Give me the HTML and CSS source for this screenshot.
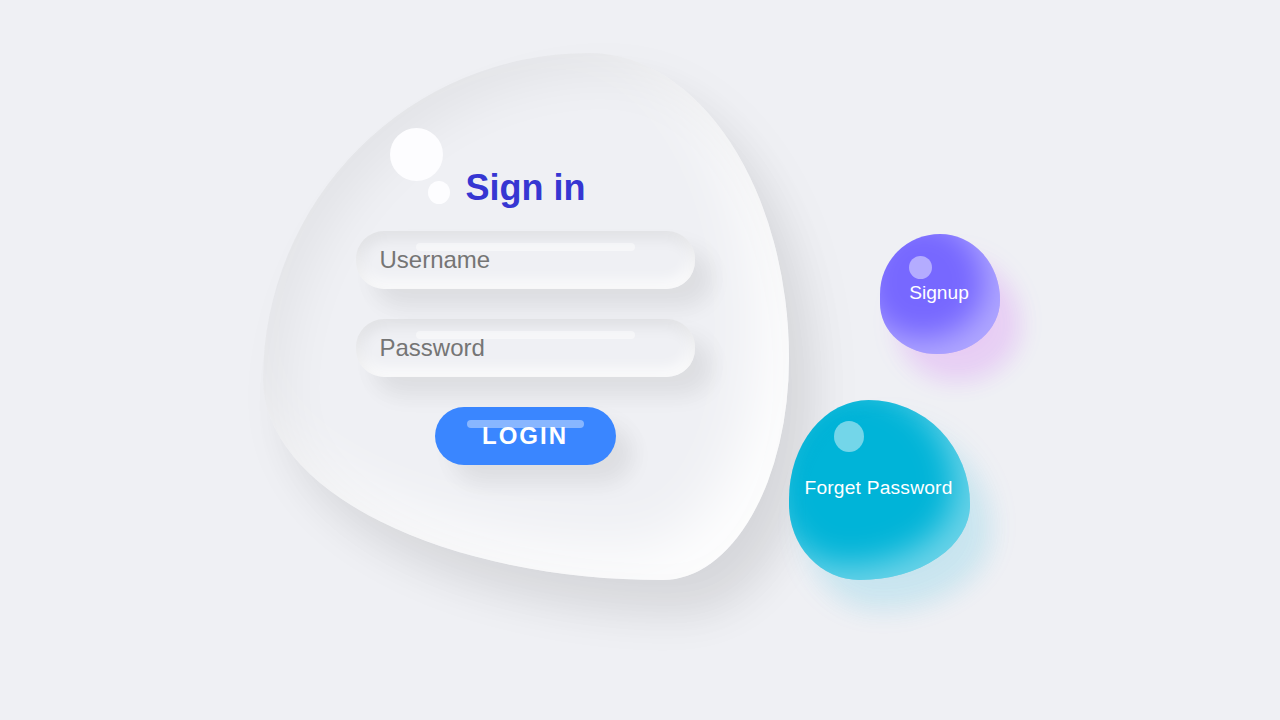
FILE: index.html
```html
<!DOCTYPE html>
<html lang="en">
<head>
    <meta charset="UTF-8">
    <meta name="viewport" content="width=device-width, initial-scale=1.0">
    <title>Sign in</title>
    <link rel="stylesheet" href="styles.css">
</head>
<body>

    <div class="container">
        <!-- Main form blob -->
        <div class="login-blob">
            <h2>Sign in</h2>
            <form class="login-form">
                <div class="field">
                    <input type="text" placeholder="Username">
                </div>
                <div class="field">
                    <input type="password" placeholder="Password">
                </div>
                <div class="field field-btn">
                    <button type="button">LOGIN</button>
                </div>
            </form>
        </div>

        <!-- Side links -->
        <div class="side-links">
            <a href="#" class="side-link signup">Signup</a>
            <a href="#" class="side-link forget">Forget Password</a>
        </div>
    </div>

</body>
</html>
```

FILE: styles.css
```css
/* General Styles */
* {
    box-sizing: border-box;
}

body {
    margin: 0;
    width: 1280px;
    height: 720px;
    overflow: hidden;
    background-color: #eff0f4;
    font-family: "Liberation Sans", Arial, sans-serif;
}

.container {
    display: flex;
    padding: 53px 0 0 263px;
}

/* Main blob */
.login-blob {
    position: relative;
    width: 526px;
    height: 527px;
    flex-shrink: 0;
    display: flex;
    flex-direction: column;
    align-items: center;
    padding: 113px 2px 0 0;
    border-radius: 62% 38% 24% 76% / 62% 58% 42% 38%;
    box-shadow: inset 20px 20px 50px rgba(0, 0, 0, 0.05),
        25px 35px 40px rgba(0, 0, 0, 0.06),
        25px 30px 60px rgba(0, 0, 0, 0.05),
        inset -30px -30px 60px rgba(255, 255, 255, 0.9);
}

.login-blob::before {
    content: "";
    position: absolute;
    top: 75px;
    left: 127px;
    width: 53px;
    height: 53px;
    border-radius: 50%;
    background-color: #fdfdff;
}

.login-blob::after {
    content: "";
    position: absolute;
    top: 128px;
    left: 165px;
    width: 22px;
    height: 23px;
    border-radius: 50%;
    background-color: #fdfdff;
}

.login-blob h2 {
    margin: 0 0 22px;
    padding-left: 1px;
    font-size: 36px;
    line-height: 43px;
    font-weight: bold;
    color: #3636d2;
}

.login-form {
    display: flex;
    flex-direction: column;
    align-items: center;
    gap: 30px;
}

/* Inputs */
.field {
    position: relative;
    width: 339px;
}

.field::before {
    content: "";
    position: absolute;
    top: 12px;
    left: 60px;
    width: 219px;
    height: 8px;
    border-radius: 5px;
    background-color: rgba(255, 255, 255, 0.45);
}

.field input {
    display: block;
    width: 100%;
    height: 58px;
    padding: 0 24px;
    border: none;
    outline: none;
    border-radius: 28px;
    background: transparent;
    font-family: inherit;
    font-size: 24px;
    box-shadow: inset 2px 6px 16px rgba(0, 0, 0, 0.08),
        inset -2px -6px 16px #fff,
        18px 20px 22px rgba(0, 0, 0, 0.05),
        15px 14px 28px rgba(0, 0, 0, 0.03);
}

.field input::placeholder {
    color: #757575;
}

/* Button */
.field-btn {
    width: 181px;
}

.field-btn::before {
    top: 13px;
    left: 32px;
    width: 117px;
    background-color: rgba(255, 255, 255, 0.4);
}

.field-btn button {
    display: block;
    width: 100%;
    height: 58px;
    padding: 0;
    border: none;
    border-radius: 29px;
    background-color: #3a86ff;
    color: #fff;
    font-family: inherit;
    font-size: 24px;
    font-weight: bold;
    letter-spacing: 2px;
    box-shadow: 18px 20px 22px rgba(0, 0, 0, 0.05),
        15px 14px 28px rgba(0, 0, 0, 0.03);
}

/* Side links */
.side-links {
    display: flex;
    flex-direction: column;
    gap: 46px;
    margin-top: 181px;
}

.side-link {
    position: relative;
    display: flex;
    align-items: center;
    justify-content: center;
    color: #fff;
    text-decoration: none;
    font-size: 19.2px;
}

.side-link::before {
    content: "";
    position: absolute;
    border-radius: 50%;
    background-color: rgba(255, 255, 255, 0.45);
}

.signup {
    width: 120px;
    height: 120px;
    margin-left: 91px;
    padding: 0 2px 2px 0;
    background-color: #7768ff;
    border-radius: 50% 50% 52% 48% / 50% 55% 45% 42%;
    box-shadow: 20px 28px 22px rgba(190, 1, 254, 0.08),
        18px 24px 32px rgba(190, 1, 254, 0.08),
        inset -15px -15px 30px rgba(255, 255, 255, 0.42);
}

.signup::before {
    top: 22px;
    left: 29px;
    width: 23px;
    height: 23px;
}

.forget {
    width: 181px;
    height: 180px;
    padding: 0 2px 4px 0;
    letter-spacing: 0.2px;
    background-color: #00b4d8;
    border-radius: 44% 56% 61% 39% / 55% 58% 42% 42%;
    box-shadow: inset 10px 10px 10px rgba(1, 180, 220, 0.05),
        20px 30px 24px rgba(1, 180, 220, 0.09),
        18px 25px 36px rgba(1, 180, 220, 0.09),
        inset -15px -15px 32px rgba(255, 255, 255, 0.42);
}

.forget::before {
    top: 21px;
    left: 45px;
    width: 30px;
    height: 31px;
}
```
